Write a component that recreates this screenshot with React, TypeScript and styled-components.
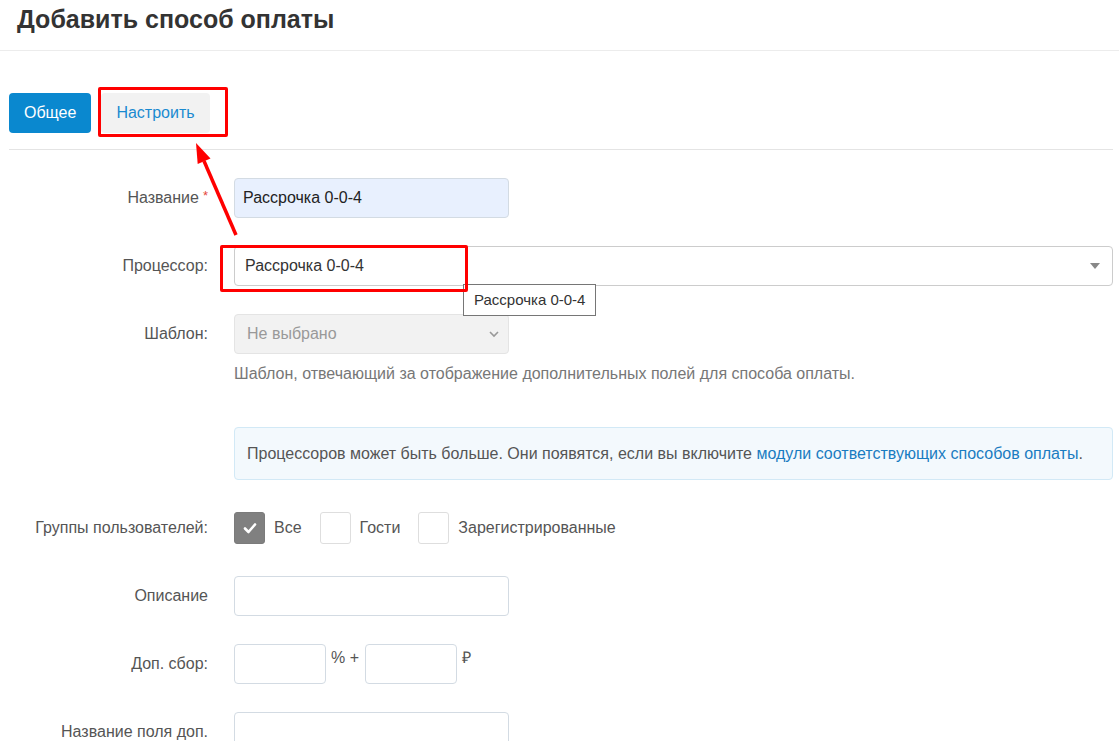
import React from "react";
import styled, { createGlobalStyle } from "styled-components";

const GlobalStyle = createGlobalStyle`
  html, body { margin: 0; padding: 0; background: #fff; }
  body { font-family: "Liberation Sans", Arial, sans-serif; color: #333; }
  * { box-sizing: border-box; }
`;

const Page = styled.div`
  position: relative;
  width: 1119px;
  min-height: 741px;
  overflow: hidden;
`;

const Header = styled.header`
  padding: 4px 17px 16px;
  border-bottom: 1px solid #ececec;
`;

const Title = styled.h1`
  margin: 0;
  font-size: 25px;
  line-height: 30px;
  font-weight: 700;
  color: #333;
`;

const Main = styled.main`
  padding: 0 6px 0 9px;
`;

const TabBar = styled.nav`
  display: flex;
  gap: 10px;
  margin-top: 42px;
  padding-bottom: 16px;
  border-bottom: 1px solid #e4e4e4;
`;

const Tab = styled.button<{ $active?: boolean }>`
  height: 40px;
  padding: 0 15px;
  border: none;
  border-radius: 4px;
  font-family: "Liberation Sans", Arial, sans-serif;
  font-size: 16px;
  background: ${(p) => (p.$active ? "#0a88cf" : "#f2f2f2")};
  color: ${(p) => (p.$active ? "#fff" : "#1a8ad0")};
  cursor: pointer;
`;

const Form = styled.div`
  display: flex;
  flex-direction: column;
  gap: 28px;
  margin-top: 28px;
`;

const Row = styled.div<{ $extraTop?: number }>`
  display: grid;
  grid-template-columns: 225px 1fr;
  align-items: start;
  margin-top: ${(p) => p.$extraTop ?? 0}px;
`;

const Label = styled.label`
  height: 40px;
  display: flex;
  align-items: center;
  justify-content: flex-end;
  padding-right: 26px;
  font-size: 16px;
  color: #555;
  white-space: nowrap;
`;

const Required = styled.span`
  color: #e5473a;
  font-size: 13px;
  align-self: flex-start;
  margin-top: 10px;
  margin-left: 4px;
`;

const Field = styled.div`
  display: flex;
  flex-direction: column;
`;

const TextInput = styled.input<{ $w?: number; $filled?: boolean }>`
  width: ${(p) => p.$w ?? 275}px;
  height: 40px;
  padding: 0 8px;
  border: 1px solid #d3dbe3;
  border-radius: 4px;
  background: ${(p) => (p.$filled ? "#e8f0fe" : "#fff")};
  font-family: "Liberation Sans", Arial, sans-serif;
  font-size: 16px;
  color: #222;
  outline: none;
`;

const SelectBox = styled.div<{ $disabled?: boolean; $w?: string }>`
  width: ${(p) => p.$w ?? "275px"};
  height: 40px;
  display: flex;
  align-items: center;
  justify-content: space-between;
  padding: 0 ${(p) => (p.$disabled ? "8px 0 12px" : "12px 0 10px")};
  border: 1px solid ${(p) => (p.$disabled ? "#e4e4e4" : "#cccccc")};
  border-radius: 4px;
  background: ${(p) => (p.$disabled ? "#f2f2f2" : "#fff")};
  font-size: 16px;
  color: ${(p) => (p.$disabled ? "#999" : "#333")};
`;

const Help = styled.p`
  margin: 10px 0 0;
  font-size: 16px;
  line-height: 20px;
  color: #777;
`;

const Info = styled.div`
  padding: 15px 12px;
  border: 1px solid #d2e9f6;
  border-radius: 4px;
  background: #f3f9fd;
  font-size: 16px;
  line-height: 21px;
  color: #555;
`;

const Link = styled.a`
  color: #1a7cc1;
  text-decoration: none;
`;

const Checks = styled.div`
  height: 40px;
  display: flex;
  align-items: center;
  gap: 18px;
`;

const CheckItem = styled.label`
  display: flex;
  align-items: center;
  gap: 9px;
  font-size: 16px;
  color: #555;
`;

const Box = styled.span<{ $checked?: boolean }>`
  width: 31px;
  height: 32px;
  display: flex;
  align-items: center;
  justify-content: center;
  border-radius: 3px;
  border: 1px solid ${(p) => (p.$checked ? "#7b7b7b" : "#dedede")};
  background: ${(p) => (p.$checked ? "#808080" : "#fff")};
`;

const FeeLine = styled.div`
  display: flex;
  align-items: flex-start;
`;

const Unit = styled.span`
  font-size: 16px;
  line-height: 20px;
  margin-top: 4px;
  padding: 0 6px 0 5px;
  color: #555;
`;

const Tooltip = styled.div`
  position: absolute;
  left: 463px;
  top: 284px;
  width: 133px;
  height: 32px;
  padding: 0 10px;
  border: 1px solid #767676;
  background: #fff;
  font-size: 15px;
  line-height: 30px;
  color: #333;
  white-space: nowrap;
`;

const Mark = styled.div<{ $l: number; $t: number; $w: number; $h: number }>`
  position: absolute;
  left: ${(p) => p.$l}px;
  top: ${(p) => p.$t}px;
  width: ${(p) => p.$w}px;
  height: ${(p) => p.$h}px;
  border: 3px solid #ff0000;
  border-radius: 2px;
  pointer-events: none;
`;

const Overlay = styled.svg`
  position: absolute;
  left: 0;
  top: 0;
  pointer-events: none;
`;

const Triangle = () => (
  <svg width="10" height="7" viewBox="0 0 10 7">
    <polygon points="0,0 10,0 5,6" fill="#888" />
  </svg>
);

const Chevron = () => (
  <svg width="12" height="8" viewBox="0 0 12 8">
    <polyline points="2,2 6,6 10,2" fill="none" stroke="#999" strokeWidth="1.6" />
  </svg>
);

const Check = () => (
  <svg width="14" height="12" viewBox="0 0 14 12">
    <polyline points="2,6.5 5.5,10 12,2.5" fill="none" stroke="#fff" strokeWidth="2.6" strokeLinecap="round" strokeLinejoin="round" />
  </svg>
);

export default function App() {
  return (
    <Page>
      <GlobalStyle />
      <Header>
        <Title>Добавить способ оплаты</Title>
      </Header>
      <Main>
        <TabBar>
          <Tab $active>Общее</Tab>
          <Tab>Настроить</Tab>
        </TabBar>
        <Form>
          <Row>
            <Label>
              Название<Required>*</Required>
            </Label>
            <TextInput $filled defaultValue="Рассрочка 0-0-4" />
          </Row>
          <Row>
            <Label>Процессор:</Label>
            <SelectBox $w="879px">
              <span>Рассрочка 0-0-4</span>
              <Triangle />
            </SelectBox>
          </Row>
          <Row>
            <Label>Шаблон:</Label>
            <Field>
              <SelectBox $disabled>
                <span>Не выбрано</span>
                <Chevron />
              </SelectBox>
              <Help>Шаблон, отвечающий за отображение дополнительных полей для способа оплаты.</Help>
            </Field>
          </Row>
          <Row $extraTop={15}>
            <span />
            <Info>
              Процессоров может быть больше. Они появятся, если вы включите{" "}
              <Link href="#">модули соответствующих способов оплаты</Link>.
            </Info>
          </Row>
          <Row>
            <Label>Группы пользователей:</Label>
            <Checks>
              <CheckItem>
                <Box $checked>
                  <Check />
                </Box>
                Все
              </CheckItem>
              <CheckItem>
                <Box />
                Гости
              </CheckItem>
              <CheckItem>
                <Box />
                Зарегистрированные
              </CheckItem>
            </Checks>
          </Row>
          <Row>
            <Label>Описание</Label>
            <TextInput />
          </Row>
          <Row>
            <Label>Доп. сбор:</Label>
            <FeeLine>
              <TextInput $w={92} />
              <Unit>% +</Unit>
              <TextInput $w={92} />
              <Unit>₽</Unit>
            </FeeLine>
          </Row>
          <Row>
            <Label>Название поля доп.</Label>
            <TextInput />
          </Row>
        </Form>
      </Main>

      <Tooltip>Рассрочка 0-0-4</Tooltip>
      <Mark $l={98} $t={87} $w={130} $h={50} />
      <Mark $l={220} $t={245} $w={248} $h={47} />
      <Overlay width="1119" height="741" viewBox="0 0 1119 741">
        <line x1="236" y1="235" x2="204" y2="161" stroke="#ff0000" strokeWidth="3.5" />
        <polygon points="196,143 210.5,158.5 197.7,164.1" fill="#ff0000" />
      </Overlay>
    </Page>
  );
}
